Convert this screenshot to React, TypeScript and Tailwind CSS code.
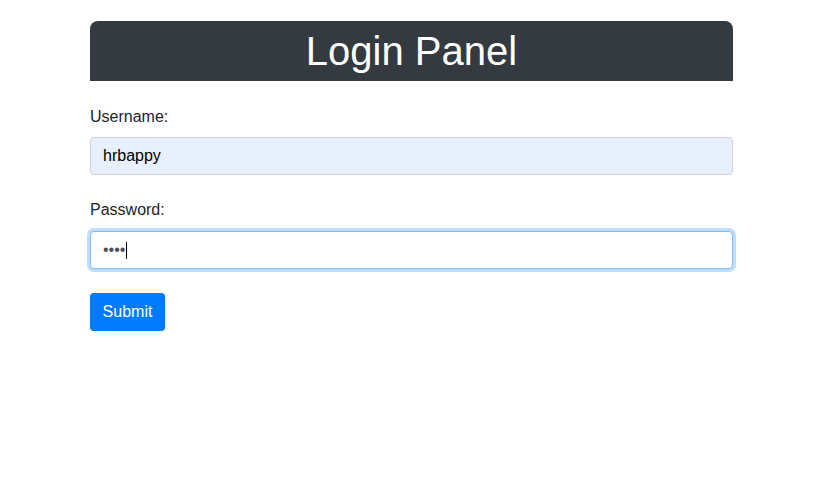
export default function App() {
  return (
    <div className="min-h-[502px] bg-white font-['Liberation_Sans',Arial,sans-serif] text-[#212529]">
      <div className="ml-[90px] w-[643px] pt-[21px]">
        {/* header */}
        <div className="flex h-[60px] items-center justify-center rounded-t-[8px] bg-[#343a40]">
          <h1 className="text-[40px] leading-[48px] text-white">Login Panel</h1>
        </div>

        <form onSubmit={(e) => e.preventDefault()}>
          <div className="mt-[24px] h-[24px] text-[16px] leading-[24px]">Username:</div>
          <div className="mt-[8px] flex h-[38px] items-center rounded-[4px] border border-[#ced4da] bg-[#e8f0fe] px-[12px] text-[16px] text-black">
            hrbappy
          </div>

          <div className="mt-[23px] h-[24px] text-[16px] leading-[24px]">Password:</div>
          <div className="mt-[9px] flex h-[38px] items-center rounded-[4px] border border-[#80bdff] bg-white px-[12px] text-[16px] text-[#495057] shadow-[0_0_0_3px_rgba(0,123,255,0.25)]">
            <span>••••</span>
            <span className="ml-[1px] inline-block h-[17px] w-px bg-black" />
          </div>

          <button
            type="submit"
            className="mt-[24px] flex h-[38px] w-[75px] items-center justify-center rounded-[4px] bg-[#007bff] text-[16px] text-white"
          >
            Submit
          </button>
        </form>
      </div>
    </div>
  );
}
